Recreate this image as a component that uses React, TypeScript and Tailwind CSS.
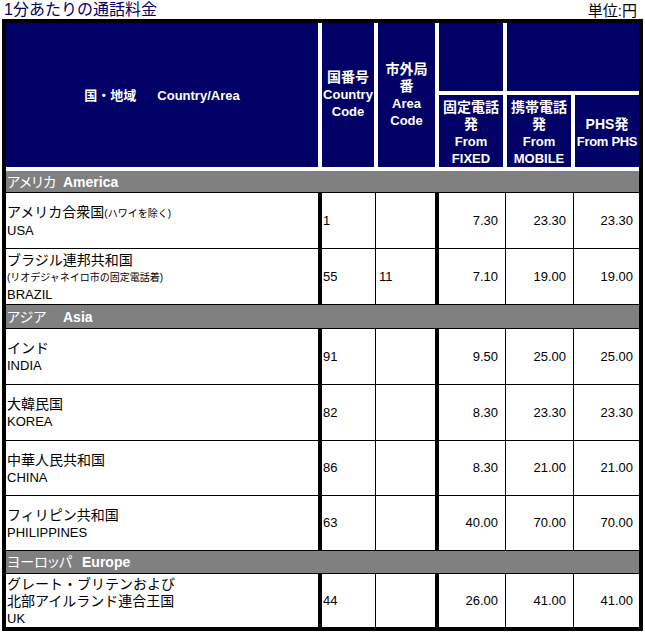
import React from "react";

type Row = {
  ja: React.ReactNode;
  en: string;
  code: string;
  area: string;
  fixed: string;
  mobile: string;
  phs: string;
  h: string;
};

const HeadCell = ({ children, className = "" }: { children?: React.ReactNode; className?: string }) => (
  <div
    className={`bg-[#000066] text-white font-bold text-[13px] leading-[17px] flex flex-col items-center justify-center text-center whitespace-nowrap ${className}`}
  >
    {children}
  </div>
);

const JH = ({ children }: { children: React.ReactNode }) => <span className="text-[14px]">{children}</span>;

const GrayRow = ({ ja, en, h, w }: { ja: string; en: string; h: string; w: string }) => (
  <div className={`flex items-center bg-[#808080] border-b border-black text-white pl-px ${h}`}>
    <span className={`text-[14px] leading-none [font-feature-settings:'palt'] ${w}`}>{ja}</span>
    <span className="text-[14px] font-bold leading-none">{en}</span>
  </div>
);

const DataRow = ({ r, last }: { r: Row; last?: boolean }) => (
  <div className={`flex text-black ${r.h} ${last ? "" : "border-b border-black"}`}>
    <div className="w-[312px] flex flex-col justify-center pl-px pt-px leading-[17px]">
      {r.ja}
      <div className="text-[13px]">{r.en}</div>
    </div>
    <div className="w-[57px] border-l-4 border-black flex items-center pl-px text-[13px]">{r.code}</div>
    <div className="w-[60px] border-l border-black flex items-center pl-[3px] text-[13px]">{r.area}</div>
    <div className="w-[70px] border-l-4 border-black flex items-center justify-end pr-[7px] text-[13px]">{r.fixed}</div>
    <div className="w-[68px] border-l border-black flex items-center justify-end pr-[7px] text-[13px]">{r.mobile}</div>
    <div className="w-[66px] border-l border-black flex items-center justify-end pr-[6px] text-[13px]">{r.phs}</div>
  </div>
);

const J = ({ children }: { children: React.ReactNode }) => (
  <div className="text-[14px] whitespace-nowrap">{children}</div>
);

export default function App() {
  const america: Row[] = [
    {
      ja: (
        <J>
          アメリカ合衆国<span className="text-[10px]">(ハワイを除く)</span>
        </J>
      ),
      en: "USA",
      code: "1",
      area: "",
      fixed: "7.30",
      mobile: "23.30",
      phs: "23.30",
      h: "h-[56px]",
    },
    {
      ja: (
        <>
          <J>ブラジル連邦共和国</J>
          <div className="text-[10px]">(リオデジャネイロ市の固定電話着)</div>
        </>
      ),
      en: "BRAZIL",
      code: "55",
      area: "11",
      fixed: "7.10",
      mobile: "19.00",
      phs: "19.00",
      h: "h-[56px]",
    },
  ];
  const asia: Row[] = [
    { ja: <J>インド</J>, en: "INDIA", code: "91", area: "", fixed: "9.50", mobile: "25.00", phs: "25.00", h: "h-[56px]" },
    { ja: <J>大韓民国</J>, en: "KOREA", code: "82", area: "", fixed: "8.30", mobile: "23.30", phs: "23.30", h: "h-[56px]" },
    { ja: <J>中華人民共和国</J>, en: "CHINA", code: "86", area: "", fixed: "8.30", mobile: "21.00", phs: "21.00", h: "h-[55px]" },
    { ja: <J>フィリピン共和国</J>, en: "PHILIPPINES", code: "63", area: "", fixed: "40.00", mobile: "70.00", phs: "70.00", h: "h-[55px]" },
  ];
  const uk: Row = {
    ja: (
      <>
        <J>グレート・ブリテンおよび</J>
        <J>北部アイルランド連合王国</J>
      </>
    ),
    en: "UK",
    code: "44",
    area: "",
    fixed: "26.00",
    mobile: "41.00",
    phs: "41.00",
    h: "h-[53px]",
  };

  return (
    <div className="w-[645px] h-[644px] overflow-hidden bg-white font-['Liberation_Sans','Noto_Sans_CJK_JP',sans-serif]">
      <div className="flex justify-between items-end h-[19px] pl-[4px] pr-[8px]">
        <span className="text-[16px] leading-[18px] text-[#000066]">1分あたりの通話料金</span>
        <span className="text-[15px] leading-[17px] text-black">単位:円</span>
      </div>
      <div className="ml-[2px] w-[641px] border-4 border-black bg-white">
        <div className="grid grid-cols-[312px_52px_57px_64px_64px_64px] grid-rows-[68px_72px] gap-[4px]">
          <HeadCell className="row-span-2 flex-row">
            <span>国・地域</span>
            <span className="ml-[21px]">Country/Area</span>
          </HeadCell>
          <HeadCell className="row-span-2 pb-[2px]">
            <JH>国番号</JH>
            <span>Country</span>
            <span>Code</span>
          </HeadCell>
          <HeadCell className="row-span-2">
            <JH>市外局</JH>
            <JH>番</JH>
            <span>Area</span>
            <span>Code</span>
          </HeadCell>
          <HeadCell />
          <HeadCell className="col-span-2" />
          <HeadCell className="pt-[3px]">
            <JH>固定電話</JH>
            <JH>発</JH>
            <span>From</span>
            <span>FIXED</span>
          </HeadCell>
          <HeadCell className="pt-[3px]">
            <JH>携帯電話</JH>
            <JH>発</JH>
            <span>From</span>
            <span>MOBILE</span>
          </HeadCell>
          <HeadCell className="pt-[3px] overflow-visible">
            <span className="text-[14px]">PHS発</span>
            <span className="tracking-[-0.3px]">From PHS</span>
          </HeadCell>
        </div>
        <div className="h-[4px]" />
        <GrayRow ja="アメリカ" en="America" h="h-[22px]" w="w-[56px]" />
        {america.map((r, i) => (
          <DataRow key={i} r={r} />
        ))}
        <GrayRow ja="アジア" en="Asia" h="h-[24px]" w="w-[56px]" />
        {asia.map((r, i) => (
          <DataRow key={i} r={r} />
        ))}
        <GrayRow ja="ヨーロッパ" en="Europe" h="h-[23px]" w="w-[75px]" />
        <DataRow r={uk} last />
      </div>
    </div>
  );
}
